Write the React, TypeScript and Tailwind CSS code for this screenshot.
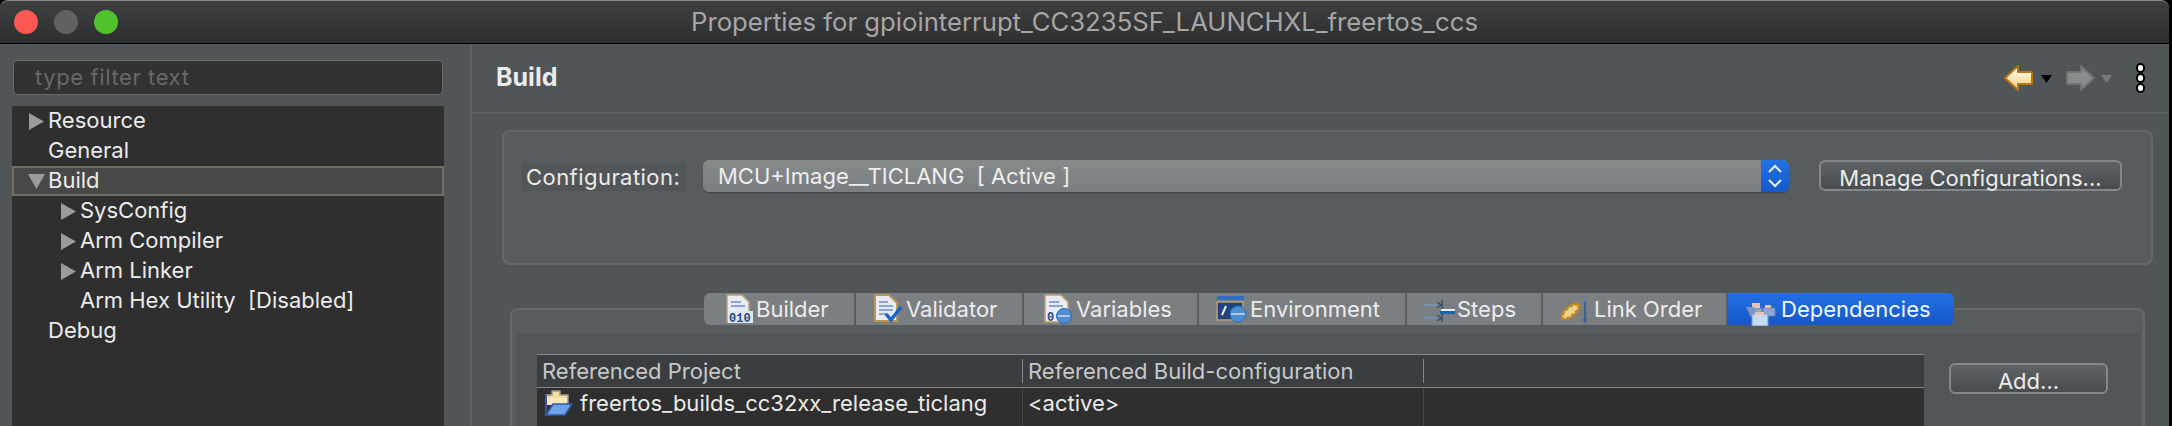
const font = "[font-family:Inter,'Liberation_Sans',sans-serif]";

function Triangle({ down = false }: { down?: boolean }) {
  return (
    <svg width="18" height="18" viewBox="0 0 18 18" className="mt-[2px] shrink-0">
      {down ? <path d="M1 2H18L9.5 17Z" fill="#9b9b9b" /> : <path d="M2 1L17 9.5L2 18Z" fill="#9b9b9b" />}
    </svg>
  );
}

function TreeRow({
  label,
  level = 0,
  arrow,
  down,
  selected,
}: {
  label: string;
  level?: 0 | 1;
  arrow?: boolean;
  down?: boolean;
  selected?: boolean;
}) {
  return (
    <div
      className={`flex h-[30px] items-center whitespace-pre pb-[2px] text-[22px] text-[#ebebeb] ${level === 1 ? "pl-[47px]" : "pl-[15px]"} ${
        selected ? "border-2 border-[#6f6f5f] bg-[#484848]" : ""
      }`}
    >
      <span className={`flex w-[21px] shrink-0 items-center ${selected ? "-ml-[2px]" : ""}`}>
        {arrow && <Triangle down={down} />}
      </span>
      {label}
    </div>
  );
}

function BuilderIcon() {
  return (
    <svg width="28" height="30" viewBox="0 0 28 30">
      <path d="M1 1H16L23 8V28H1Z" fill="#e6ebf4" stroke="#b9a374" strokeWidth="1.5" />
      <path d="M5 8H15M5 12H19" stroke="#8ea4cf" strokeWidth="2" />
      <rect x="2" y="17" width="25" height="12" fill="#dfe6f2" />
      <text x="3" y="28" fontSize="12" fontWeight="700" fill="#1e4a86" fontFamily="'Liberation Mono',monospace">010</text>
    </svg>
  );
}

function ValidatorIcon() {
  return (
    <svg width="30" height="30" viewBox="0 0 30 30">
      <path d="M1 1H15L23 9V27H1Z" fill="#e6ebf4" stroke="#b9975a" strokeWidth="2" />
      <path d="M5 8H14M5 12H19M5 16H19M5 20H13" stroke="#8ea4cf" strokeWidth="2" />
      <path d="M12 20L17 26L27 13" fill="none" stroke="#1565d0" strokeWidth="3.5" />
    </svg>
  );
}

function VariablesIcon() {
  return (
    <svg width="30" height="30" viewBox="0 0 30 30">
      <path d="M1 1H17L24 8V28H1Z" fill="#e6ebf4" stroke="#b9a374" strokeWidth="1.5" />
      <path d="M5 8H15M5 12H19" stroke="#8ea4cf" strokeWidth="2" />
      <text x="3" y="27" fontSize="12" fontWeight="700" fill="#1e4a86" fontFamily="'Liberation Mono',monospace">0</text>
      <circle cx="20" cy="22" r="7.5" fill="#4f8fd0" stroke="#2c6cb4" />
      <path d="M14 22H26" stroke="#a8c8ea" strokeWidth="2" />
    </svg>
  );
}

function EnvironmentIcon() {
  return (
    <svg width="32" height="28" viewBox="0 0 32 28">
      <rect x="1" y="1" width="27" height="4" fill="#2f6fc0" />
      <rect x="1" y="7" width="26" height="18" fill="#22447c" stroke="#b9a374" strokeWidth="1.5" />
      <path d="M6 20L10 11" stroke="#e8eef7" strokeWidth="2" />
      <circle cx="22" cy="19" r="8" fill="#4f8fd0" stroke="#2c6cb4" />
      <path d="M15 19H29" stroke="#a8c8ea" strokeWidth="2" />
    </svg>
  );
}

function StepsIcon() {
  return (
    <svg width="31" height="26" viewBox="0 0 31 26">
      <path d="M0 9H13M0 22H13" stroke="#6f98bd" strokeWidth="1.5" />
      <path d="M13 6L17 9L13 12M13 19L17 22L13 25M18 4V26" fill="none" stroke="#3d4f63" strokeWidth="1.5" />
      <rect x="17" y="13" width="14" height="2" fill="#e8eef7" />
      <rect x="16" y="15" width="15" height="3" fill="#1f62b4" />
    </svg>
  );
}

function LinkOrderIcon() {
  return (
    <svg width="32" height="30" viewBox="0 0 32 30">
      <ellipse cx="10.5" cy="17.5" rx="10.5" ry="4.5" transform="rotate(-40 10.5 17.5)" fill="#ecd288" stroke="#c5861a" strokeWidth="3" strokeDasharray="4 1.5" />
      <path d="M25 6V27" stroke="#3f5f92" strokeWidth="2" />
      <path d="M22 25L25 29L28 25Z" fill="#3f5f92" />
      <path d="M23 8L25 4L27 8Z" fill="#5f7fb2" />
    </svg>
  );
}

function DependenciesIcon() {
  return (
    <svg width="30" height="24" viewBox="0 0 30 24" className="translate-y-[5px]">
      <rect x="4" y="6" width="12" height="8" fill="#8fa9d4" stroke="#6d80b0" />
      <rect x="6" y="1" width="8" height="5" fill="#e6c4b4" />
      <rect x="17" y="6" width="12" height="8" fill="#8fa9d4" stroke="#6d80b0" />
      <rect x="19" y="3" width="6" height="3" fill="#e6c4b4" />
      <path d="M0 5H8L11 13H4Z" fill="#7d94c4" />
      <rect x="6" y="12" width="16" height="12" fill="#c4d9f2" stroke="#7d94c4" />
      <rect x="9" y="10" width="9" height="3" fill="#e6c4b4" />
    </svg>
  );
}

function FolderIcon() {
  return (
    <svg width="30" height="28" viewBox="0 0 30 28">
      <path d="M3 6H9V2H17V6H25V14H3Z" fill="#f4dc9b" stroke="#9f9a8e" strokeWidth="1.5" />
      <path d="M4 9H24V16H4Z" fill="#f8e8bb" />
      <path d="M3 6V26H9" fill="none" stroke="#3559a8" strokeWidth="2" />
      <path d="M10 15H29L22 26H3Z" fill="#6ea3e4" stroke="#2f55a3" strokeWidth="1.5" />
    </svg>
  );
}

const tabs = [
  { label: "Builder", icon: <BuilderIcon />, w: "w-[152px] pl-[22px] rounded-l-[6px]" },
  { label: "Validator", icon: <ValidatorIcon />, w: "w-[168px] pl-[18px]" },
  { label: "Variables", icon: <VariablesIcon />, w: "w-[175px] pl-[20px]" },
  { label: "Environment", icon: <EnvironmentIcon />, w: "w-[208px] pl-[17px]" },
  { label: "Steps", icon: <StepsIcon />, w: "w-[136px] pl-[17px]" },
  { label: "Link Order", icon: <LinkOrderIcon />, w: "w-[185px] pl-[17px]" },
];

export default function App() {
  return (
    <div className={`flex h-[426px] w-[2172px] flex-col overflow-hidden bg-black pr-[3px] ${font}`}>
      <header className="relative flex h-[44px] shrink-0 items-center gap-[16px] rounded-t-[8px] border-t border-b border-t-[#8a8a8a] border-b-black bg-gradient-to-b from-[#3e3f41] to-[#2e2f30] pl-[14px]">
        <span className="h-[24px] w-[24px] rounded-full bg-[#fd5853]" />
        <span className="h-[24px] w-[24px] rounded-full bg-[#606163]" />
        <span className="h-[24px] w-[24px] rounded-full bg-[#50c22b]" />
        <h1 className="absolute inset-x-0 text-center text-[25.7px] text-[#a6a6a6]">
          Properties for gpiointerrupt_CC3235SF_LAUNCHXL_freertos_ccs
        </h1>
      </header>

      <div className="flex min-h-0 flex-1 bg-[#505557]">
        <aside className="flex w-[470px] shrink-0 flex-col pl-[12px] pr-[26px] pt-[16px]">
          <div className="ml-[1px] flex h-[35px] w-[430px] items-center rounded-[5px] border border-[#666a6c] bg-[#323232] pl-[21px] text-[22px] tracking-[0.6px] text-[#686868]">
            type filter text
          </div>
          <div className="mt-[11px] flex-1 bg-[#2f2f2f]">
            <TreeRow label="Resource" arrow />
            <TreeRow label="General" />
            <TreeRow label="Build" arrow down selected />
            <TreeRow label="SysConfig" level={1} arrow />
            <TreeRow label="Arm Compiler" level={1} arrow />
            <TreeRow label="Arm Linker" level={1} arrow />
            <TreeRow label="Arm Hex Utility  [Disabled]" level={1} />
            <TreeRow label="Debug" />
          </div>
        </aside>

        <main className="flex min-w-0 flex-1 flex-col border-l-2 border-[#5f6365]">
          <div className="flex h-[70px] shrink-0 items-center justify-between border-b-2 border-[#5c6163] pl-[24px] pr-[24px]">
            <h2 className="text-[25px] font-bold text-[#ececec]">Build</h2>
            <div className="flex items-center">
              <svg width="30" height="26" viewBox="0 0 30 26">
                <defs>
                  <linearGradient id="back" x1="0" y1="0" x2="0" y2="1">
                    <stop offset="0" stopColor="#ffffff" />
                    <stop offset="1" stopColor="#f5cf78" />
                  </linearGradient>
                </defs>
                <path d="M1 13L14 1V7H28V19H14V25Z" fill="url(#back)" stroke="#b5760f" strokeWidth="2" strokeLinejoin="round" />
              </svg>
              <svg width="11" height="8" viewBox="0 0 11 8" className="ml-[7px] mt-[2px]"><path d="M0 0H11L5.5 8Z" fill="#000" /></svg>
              <svg width="30" height="26" viewBox="0 0 30 26" className="ml-[13px]">
                <path d="M29 13L16 1V7H2V19H16V25Z" fill="#888c8d" stroke="#6f7374" strokeWidth="2" strokeLinejoin="round" />
              </svg>
              <svg width="11" height="8" viewBox="0 0 11 8" className="ml-[6px] mt-[2px]"><path d="M0 0H11L5.5 8Z" fill="#777b7c" /></svg>
              <div className="ml-[24px] flex flex-col">
                <span className="h-[10px] w-[9px] rounded-full border-2 border-black bg-white" />
                <span className="h-[10px] w-[9px] rounded-full border-2 border-black bg-white" />
                <span className="h-[10px] w-[9px] rounded-full border-2 border-black bg-white" />
              </div>
            </div>
          </div>

          <div className="flex min-h-0 flex-1 flex-col pl-[30px] pr-[16px] pt-[16px]">
            <section className="flex h-[135px] shrink-0 items-start rounded-[8px] border-2 border-[#63686a] bg-[#585c5e] pl-[18px] pt-[28px]">
              <span className="mt-[3px] flex h-[28px] w-[164px] items-center bg-[#525659] pl-[4px] text-[22px] tracking-[0.45px] text-[#ebebeb]">
                Configuration:
              </span>
              <div className="ml-[17px] flex h-[32px] w-[1086px] shrink-0 items-center justify-between overflow-hidden rounded-[6px] bg-gradient-to-b from-[#868a8b] to-[#7a7e80] shadow-[0_1px_1px_#3f4244]">
                <span className="whitespace-pre pl-[15px] text-[22px] text-[#eeeeee]">MCU+Image__TICLANG  [ Active ]</span>
                <span className="flex h-full w-[28px] items-center justify-center bg-gradient-to-b from-[#2273e4] to-[#1558c9]">
                  <svg width="16" height="24" viewBox="0 0 16 24"><path d="M2 8L8 2L14 8M2 16L8 22L14 16" fill="none" stroke="#e8f0fb" strokeWidth="2" /></svg>
                </span>
              </div>
              <button className="ml-[30px] h-[31px] w-[303px] shrink-0 rounded-[6px] border-2 border-[#84888a] bg-gradient-to-b from-[#5f6365] to-[#484c4e] text-[22px] text-[#ebebeb]">
                Manage Configurations...
              </button>
            </section>

            <div className="relative z-10 ml-[202px] mt-[28px] flex h-[32px] shrink-0 -mb-[17px]">
              {tabs.map((t) => (
                <div
                  key={t.label}
                  className={`flex items-center gap-[2px] whitespace-pre border-r-2 border-[#5b5f61] bg-[#7b7f81] text-[22px] text-[#ececec] ${t.w}`}
                >
                  {t.icon}
                  {t.label}
                </div>
              ))}
              <div className="flex w-[226px] items-center gap-[5px] rounded-r-[6px] bg-gradient-to-b from-[#2270e2] to-[#1558c9] pl-[18px] text-[22px] text-[#f2f6fd]">
                <DependenciesIcon />
                Dependencies
              </div>
            </div>

            <section className="ml-[8px] mr-[8px] flex min-h-0 flex-1 flex-col rounded-t-[8px] border-x-2 border-t-2 border-[#666a6c] bg-[#585c5e] pl-[4px] pr-[3px] pt-[23px]">
              <div className="flex flex-1 items-start bg-[#525658] pl-[21px] pt-[21px]">
                <div className="flex h-[100px] w-[1387px] shrink-0 flex-col bg-[#2f2f2f]">
                  <div className="flex h-[34px] shrink-0 items-center border-y border-[#85898b] bg-[#3a3e40] text-[22px] text-[#c8c8c8]">
                    <span className="w-[485px] pl-[5px]">Referenced Project</span>
                    <span className="h-[24px] w-[1px] bg-[#85898b]" />
                    <span className="w-[400px] pl-[5px]">Referenced Build-configuration</span>
                    <span className="h-[24px] w-[1px] bg-[#85898b]" />
                  </div>
                  <div className="flex flex-1 text-[22px] text-[#ebebeb]">
                    <span className="flex h-[30px] w-[485px] items-center pl-[6px]">
                      <FolderIcon />
                      <span className="ml-[7px]">freertos_builds_cc32xx_release_ticlang</span>
                    </span>
                    <span className="w-[1px] bg-[#45484a]" />
                    <span className="flex h-[30px] w-[400px] items-center pl-[5px]">&lt;active&gt;</span>
                    <span className="w-[1px] bg-[#45484a]" />
                  </div>
                </div>
                <button className="ml-[25px] mt-[9px] h-[31px] w-[159px] shrink-0 rounded-[6px] border-2 border-[#84888a] bg-gradient-to-b from-[#5f6365] to-[#484c4e] text-[22px] text-[#ebebeb]">
                  Add...
                </button>
              </div>
            </section>
          </div>
        </main>
      </div>
    </div>
  );
}
